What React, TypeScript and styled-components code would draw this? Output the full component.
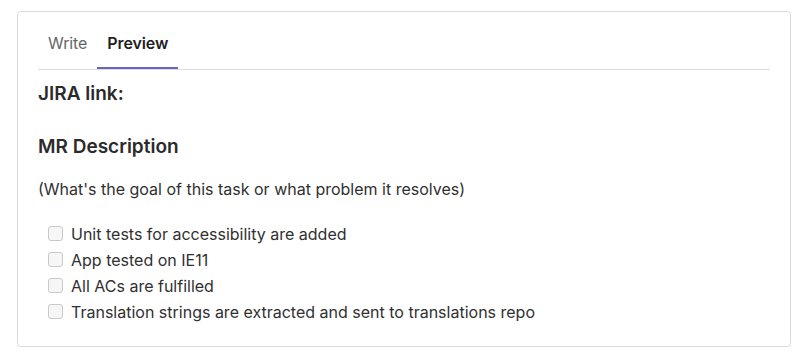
import { useState } from "react";
import styled, { createGlobalStyle } from "styled-components";

const GlobalStyle = createGlobalStyle`
  html, body {
    margin: 0;
    padding: 0;
    background: #ffffff;
  }
  body {
    font-family: Inter, "Liberation Sans", Arial, sans-serif;
    color: #303030;
    -webkit-font-smoothing: antialiased;
  }
`;

const Page = styled.div`
  padding: 11px 10px 0 17px;
`;

const Card = styled.div`
  width: 774px;
  height: 336px;
  box-sizing: border-box;
  border: 1px solid #dbdbdb;
  border-radius: 4px;
  padding: 0 20px;
`;

const TabList = styled.div`
  display: flex;
  border-bottom: 1px solid #dcdcde;
`;

const Tab = styled.button<{ $active: boolean }>`
  appearance: none;
  background: none;
  border: 0;
  border-bottom: 2px solid ${(p) => (p.$active ? "#6666c4" : "transparent")};
  margin: 0;
  padding: 21px 10px 14px;
  font-family: inherit;
  font-size: 16px;
  line-height: 20px;
  font-weight: ${(p) => (p.$active ? 600 : 400)};
  color: ${(p) => (p.$active ? "#1f1f1f" : "#666666")};
  letter-spacing: -0.1px;
  cursor: pointer;
`;

const Preview = styled.div`
  padding-top: 11px;
`;

const Heading = styled.h3<{ $gap: number }>`
  margin: 0 0 ${(p) => p.$gap}px;
  font-size: 19px;
  line-height: 25px;
  font-weight: 600;
  color: #2b2b2b;
`;

const Paragraph = styled.p`
  margin: 0 0 20px;
  font-size: 16px;
  line-height: 24px;
  color: #303030;
`;

const TaskList = styled.ul`
  list-style: none;
  margin: 0;
  padding: 0 0 0 10px;
`;

const TaskItem = styled.li`
  display: flex;
  align-items: center;
  gap: 8px;
  font-size: 16px;
  line-height: 26px;
  color: #303030;
`;

const Box = styled.span`
  width: 15px;
  height: 15px;
  box-sizing: border-box;
  border: 1px solid #c9c9c9;
  border-radius: 3px;
  background: #f6f6f6;
  flex-shrink: 0;
  margin-top: -2px;
`;

const TASKS = [
  "Unit tests for accessibility are added",
  "App tested on IE11",
  "All ACs are fulfilled",
  "Translation strings are extracted and sent to translations repo",
];

const App = () => {
  const [tab, setTab] = useState<"write" | "preview">("preview");

  return (
    <>
      <GlobalStyle />
      <Page>
        <Card>
          <TabList>
            <Tab $active={tab === "write"} onClick={() => setTab("write")}>
              Write
            </Tab>
            <Tab $active={tab === "preview"} onClick={() => setTab("preview")}>
              Preview
            </Tab>
          </TabList>
          <Preview>
            <Heading $gap={28}>JIRA link:</Heading>
            <Heading $gap={18}>MR Description</Heading>
            <Paragraph>
              (What's the goal of this task or what problem it resolves)
            </Paragraph>
            <TaskList>
              {TASKS.map((task) => (
                <TaskItem key={task}>
                  <Box />
                  {task}
                </TaskItem>
              ))}
            </TaskList>
          </Preview>
        </Card>
      </Page>
    </>
  );
};

export default App;
